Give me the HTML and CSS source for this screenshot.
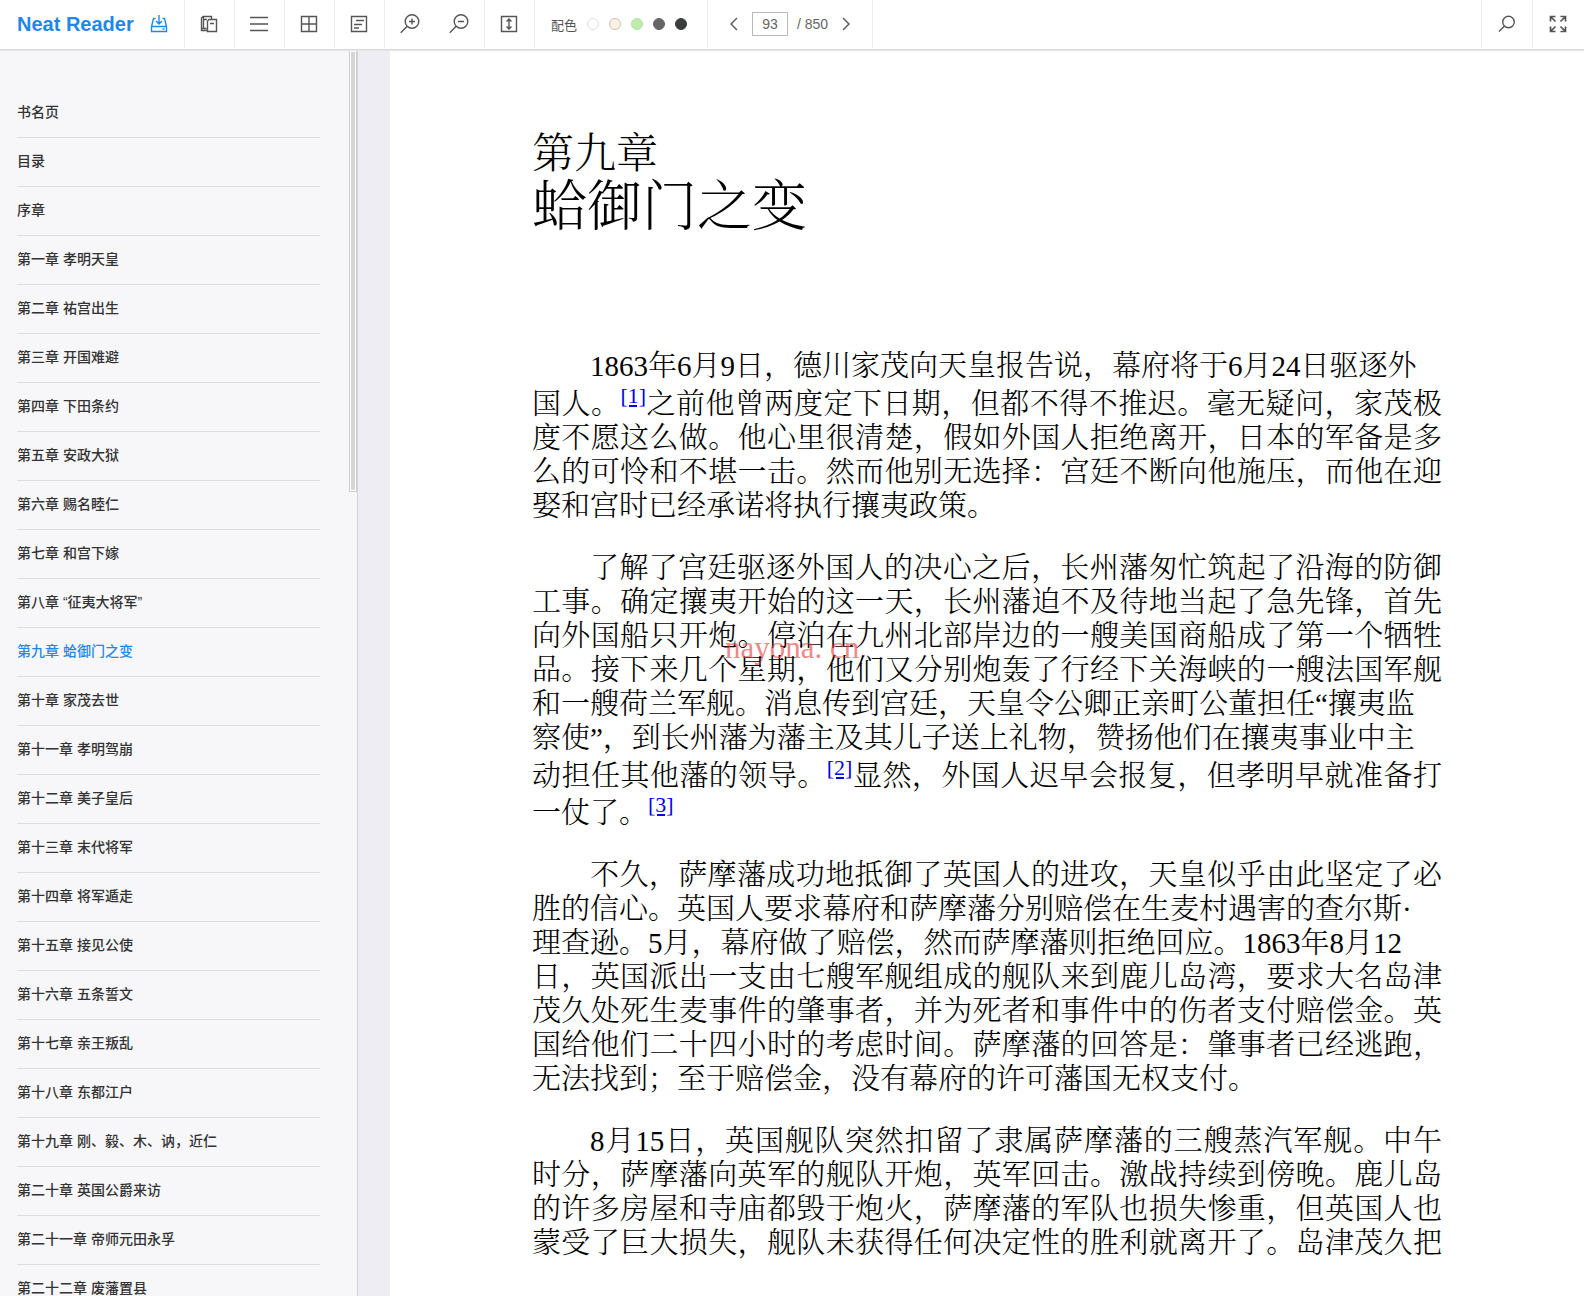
FILE: index.html
```html
<!DOCTYPE html>
<html lang="zh-CN">
<head>
<meta charset="utf-8">
<meta name="viewport" content="width=device-width, initial-scale=1">
<title>Neat Reader</title>
<link rel="stylesheet" href="styles.css">
</head>
<body>
<header class="toolbar">
  <div class="brand">
    <a class="brand-name" href="#">Neat Reader</a>
    <button class="icon-button save" aria-label="保存">
      <svg width="18" height="18" viewBox="0 0 18 18"><path d="M5.500 3.500H3.500L1.500 11.500V16.500H16.500V11.500L14.500 3.500H12.500M1.500 11.500H16.500M9 0V9M6 6L9 9L12 6M12.500 14H14.500"/></svg>
    </button>
  </div>
  <button class="tool" aria-label="复制">
    <svg width="18" height="18" viewBox="0 0 18 18"><path d="M6.500 13.500H1.500V3L3 1.500H11.500V4.500M3.500 1.500V13.500M1.500 13.500V15.500H7.500M7.500 6V16.500H16.500V4.500H9L7.500 6M10 8.500H14M3.500 4.500H7"/></svg>
  </button>
  <button class="tool" aria-label="目录">
    <svg width="18" height="18" viewBox="0 0 18 18"><path d="M0 2.500H18M0 9H18M0 15.500H18"/></svg>
  </button>
  <button class="tool" aria-label="网格">
    <svg width="18" height="18" viewBox="0 0 18 18"><path d="M1.500 1.500H16.500V16.500H1.500ZM9 1.500V16.500M1.500 9H16.500"/></svg>
  </button>
  <button class="tool" aria-label="笔记">
    <svg width="18" height="18" viewBox="0 0 18 18"><path d="M1.500 1.500H16.500V16.500H1.500ZM6 5.500H14M4 9.500H12M4 13H9"/></svg>
  </button>
  <button class="tool plain" aria-label="放大">
    <svg width="20" height="20" viewBox="0 0 20 20"><circle cx="12" cy="7.500" r="6.800"/><path d="M7.200 12.300L.7 18.800M9 7.500H15M12 4.500V10.500"/></svg>
  </button>
  <button class="tool" aria-label="缩小">
    <svg width="20" height="20" viewBox="0 0 20 20"><circle cx="12" cy="7.500" r="6.800"/><path d="M7.200 12.300L.7 18.800M9 7.500H15"/></svg>
  </button>
  <button class="tool" aria-label="适应高度">
    <svg width="18" height="18" viewBox="0 0 18 18"><path d="M1.500 1.500H16.500V16.500H1.500ZM9 4V14M6.500 6.500L9 4L11.500 6.500M6.500 11.500L9 14L11.500 11.500"/></svg>
  </button>
  <div class="palette" role="radiogroup" aria-labelledby="palette-label">
    <span id="palette-label">配色</span>
    <input class="swatch white" type="radio" name="theme" aria-label="白色">
    <input class="swatch cream" type="radio" name="theme" aria-label="米色">
    <input class="swatch green" type="radio" name="theme" aria-label="绿色">
    <input class="swatch gray" type="radio" name="theme" aria-label="灰色">
    <input class="swatch black" type="radio" name="theme" aria-label="黑色">
  </div>
  <div class="pager">
    <button class="icon-button" aria-label="上一页"><svg width="8" height="14" viewBox="0 0 8 14"><path d="M7 1L1 7L7 13"/></svg></button>
    <input class="page-number" type="text" value="93" aria-label="页码">
    <span class="page-total">/ 850</span>
    <button class="icon-button" aria-label="下一页"><svg width="8" height="14" viewBox="0 0 8 14"><path d="M1 1L7 7L1 13"/></svg></button>
  </div>
  <div class="spacer"></div>
  <button class="tool wide" aria-label="搜索">
    <svg width="18" height="18" viewBox="0 0 18 18"><circle cx="10.500" cy="7" r="5.800"/><path d="M6.300 11.200L1 16.500"/></svg>
  </button>
  <button class="tool wide plain" aria-label="全屏">
    <svg width="18" height="18" viewBox="0 0 18 18"><path class="strong" d="M1.500 6.500V1.500H6.500M1.500 1.500L6.500 6.500M11.500 1.500H16.500V6.500M16.500 1.500L11.500 6.500M1.500 11.500V16.500H6.500M1.500 16.500L6.500 11.500M11.500 16.500H16.500V11.500M16.500 16.500L11.500 11.500"/></svg>
  </button>
</header>
<div class="workspace">
  <nav class="sidebar" aria-label="目录">
    <ul class="chapters">
      <li><a href="#">书名页</a></li>
      <li><a href="#">目录</a></li>
      <li><a href="#">序章</a></li>
      <li><a href="#">第一章 孝明天皇</a></li>
      <li><a href="#">第二章 祐宫出生</a></li>
      <li><a href="#">第三章 开国难避</a></li>
      <li><a href="#">第四章 下田条约</a></li>
      <li><a href="#">第五章 安政大狱</a></li>
      <li><a href="#">第六章 赐名睦仁</a></li>
      <li><a href="#">第七章 和宫下嫁</a></li>
      <li><a href="#">第八章 “征夷大将军”</a></li>
      <li><a class="current" href="#" aria-current="page">第九章 蛤御门之变</a></li>
      <li><a href="#">第十章 家茂去世</a></li>
      <li><a href="#">第十一章 孝明驾崩</a></li>
      <li><a href="#">第十二章 美子皇后</a></li>
      <li><a href="#">第十三章 末代将军</a></li>
      <li><a href="#">第十四章 将军遁走</a></li>
      <li><a href="#">第十五章 接见公使</a></li>
      <li><a href="#">第十六章 五条誓文</a></li>
      <li><a href="#">第十七章 亲王叛乱</a></li>
      <li><a href="#">第十八章 东都江户</a></li>
      <li><a href="#">第十九章 刚、毅、木、讷，近仁</a></li>
      <li><a href="#">第二十章 英国公爵来访</a></li>
      <li><a href="#">第二十一章 帝师元田永孚</a></li>
      <li><a href="#">第二十二章 废藩置县</a></li>
    </ul>
    <div class="scrollbar"><div class="thumb"></div></div>
  </nav>
  <main class="reader">
    <article class="page">
      <h1><span class="chapter-number">第九章</span><span class="chapter-title">蛤御门之变</span></h1>
      <p>1863年6月9日，德川家茂向天皇报告说，幕府将于6月24日驱逐外<br>国人。<sup><a href="#">[1]</a></sup>之前他曾两度定下日期，但都不得不推迟。毫无疑问，家茂极度不愿这么做。他心里很清楚，假如外国人拒绝离开，日本的军备是多么的可怜和不堪一击。然而他别无选择：宫廷不断向他施压，而他在迎娶和宫时已经承诺将执行攘夷政策。</p>
      <p>了解了宫廷驱逐外国人的决心之后，长州藩匆忙筑起了沿海的防御工事。确定攘夷开始的这一天，长州藩迫不及待地当起了急先锋，首先向外国船只开炮。停泊在九州北部岸边的一艘美国商船成了第一个牺牲品。接下来几个星期，他们又分别炮轰了行经下关海峡的一艘法国军舰和一艘荷兰军舰。消息传到宫廷，天皇令公卿正亲町公董担任“攘夷监<br>察使”，到长州藩为藩主及其儿子送上礼物，赞扬他们在攘夷事业中主<br>动担任其他藩的领导。<sup><a href="#">[2]</a></sup>显然，外国人迟早会报复，但孝明早就准备打一仗了。<sup><a href="#">[3]</a></sup></p>
      <p>不久，萨摩藩成功地抵御了英国人的进攻，天皇似乎由此坚定了必胜的信心。英国人要求幕府和萨摩藩分别赔偿在生麦村遇害的查尔斯·<br>理查逊。5月，幕府做了赔偿，然而萨摩藩则拒绝回应。1863年8月12<br>日，英国派出一支由七艘军舰组成的舰队来到鹿儿岛湾，要求大名岛津茂久处死生麦事件的肇事者，并为死者和事件中的伤者支付赔偿金。英国给他们二十四小时的考虑时间。萨摩藩的回答是：肇事者已经逃跑，无法找到；至于赔偿金，没有幕府的许可藩国无权支付。</p>
      <p>8月15日，英国舰队突然扣留了隶属萨摩藩的三艘蒸汽军舰。中午<br>时分，萨摩藩向英军的舰队开炮，英军回击。激战持续到傍晚。鹿儿岛的许多房屋和寺庙都毁于炮火，萨摩藩的军队也损失惨重，但英国人也蒙受了巨大损失，舰队未获得任何决定性的胜利就离开了。岛津茂久把</p>
      <div class="watermark">nayona. cn</div>
    </article>
  </main>
</div>
</body>
</html>
```

FILE: styles.css
```css
* { box-sizing: border-box; }

body {
  margin: 0;
  height: 100vh;
  display: flex;
  flex-direction: column;
  overflow: hidden;
  background: #fff;
  color: #333;
  font-family: "Liberation Sans", "Noto Sans CJK SC", sans-serif;
  font-size: 14px;
}

svg {
  display: block;
  fill: none;
  stroke: #555;
  stroke-width: 1.4;
}

.strong { stroke-width: 1.7; }

button {
  margin: 0;
  padding: 0;
  border: 0;
  background: none;
}

.toolbar {
  flex: none;
  display: flex;
  height: 50px;
  padding-bottom: 1px;
  background: #fff;
  border-bottom: 1px solid #d8d8da;
  box-shadow: 0 1px 1px #e8e8ea;
  z-index: 1;
}

.brand {
  display: flex;
  align-items: center;
  gap: 16px;
  width: 185px;
  padding-left: 17px;
  border-right: 1px solid #ececec;
}

.brand-name {
  color: #1e88e8;
  font-size: 20px;
  font-weight: bold;
  line-height: 48px;
  text-decoration: none;
  white-space: nowrap;
}

.save svg { stroke: #1e88e8; }

.tool {
  flex: none;
  display: flex;
  align-items: center;
  justify-content: center;
  width: 50px;
  padding-right: 1px;
  border-right: 1px solid #ececec;
}

.tool.wide { width: 51px; }

.tool.plain { border-right: 0; }

.palette {
  display: flex;
  align-items: center;
  gap: 10px;
  width: 173px;
  padding-left: 16px;
  border-right: 1px solid #ececec;
  color: #555;
  font-size: 13px;
}

.swatch {
  appearance: none;
  flex: none;
  width: 12px;
  height: 12px;
  margin: 0;
  border: 1px solid;
  border-radius: 50%;
}

.white { background: #fff; border-color: #ddd; }
.cream { background: #fbf0e4; border-color: #cdbfb2; }
.green { background: #c1eaae; border-color: #b7e2a3; }
.gray { background: #666; border-color: #666; }
.black { background: #3b3d3d; border-color: #3b3d3d; }

.pager {
  display: flex;
  align-items: center;
  width: 165px;
  padding-left: 22px;
  border-right: 1px solid #ececec;
  color: #666;
}

.page-number {
  width: 36px;
  height: 24px;
  margin: 0 9px 0 14px;
  padding: 0;
  border: 1px solid #bbb;
  color: #666;
  font: 14px "Liberation Sans", sans-serif;
  text-align: center;
}

.page-total { margin-right: 14px; }

.spacer {
  flex: 1;
  border-right: 1px solid #ececec;
}

.workspace {
  flex: 1;
  display: flex;
  min-height: 0;
}

.sidebar {
  flex: none;
  display: flex;
  justify-content: space-between;
  width: 358px;
  overflow: hidden;
  background: #f7f7fa;
  border-right: 1px solid #d4d4d8;
}

.chapters {
  width: 320px;
  margin: 0;
  padding: 39px 0 0 17px;
  list-style: none;
}

.chapters a {
  display: block;
  height: 49px;
  border-bottom: 1px solid #dedee2;
  color: #333;
  font-family: "Liberation Sans", "Noto Sans CJK SC", sans-serif;
  font-weight: 500;
  line-height: 46px;
  text-decoration: none;
}

.chapters .current { color: #1e88e8; }

.scrollbar { width: 8px; }

.thumb {
  height: 442px;
  border: 1px solid #ccc;
  background: #d6d6d8;
  box-shadow: inset 0 0 0 1px #fff;
}

.reader {
  flex: 1;
  min-width: 0;
  padding-left: 32px;
  overflow: hidden;
  background: #ededf3;
}

.page {
  position: relative;
  min-height: 100%;
  padding: 81px 142px 0;
  background: #fff;
  color: #000;
  font-family: "Liberation Serif", "AR PL UMing CN", "Noto Serif CJK SC", "Noto Sans CJK SC", serif;
  font-size: 29px;
  font-weight: 300;
  line-height: 34px;
}

h1 {
  margin: 0 0 112px;
  font-weight: 300;
}

h1 span { display: block; }

.chapter-number {
  font-size: 42px;
  line-height: 46px;
}

.chapter-title {
  font-size: 55px;
  line-height: 60px;
}

p {
  margin: 0 0 28px;
  text-align: justify;
  text-indent: 2em;
}

p:last-of-type { text-align-last: justify; }

sup {
  font-size: 22px;
  line-height: 25px;
}

sup a { color: #0000ee; }

.watermark {
  position: absolute;
  top: 581px;
  left: 335px;
  color: #e23c3c;
  font-size: 31px;
  opacity: .6;
}
```
